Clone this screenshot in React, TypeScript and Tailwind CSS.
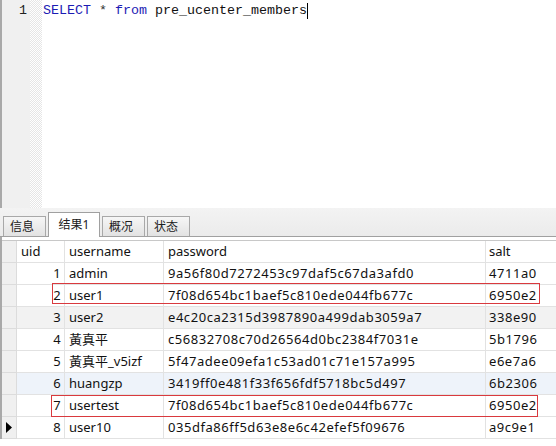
import React from "react";

const rows = [
  { uid: 1, name: "admin", pw: "9a56f80d7272453c97daf5c67da3afd0", salt: "4711a0", bg: "bg-white" },
  { uid: 2, name: "user1", pw: "7f08d654bc1baef5c810ede044fb677c", salt: "6950e2", bg: "bg-white" },
  { uid: 3, name: "user2", pw: "e4c20ca2315d3987890a499dab3059a7", salt: "338e90", bg: "bg-[#f2f2f2]" },
  { uid: 4, name: "黃真平", pw: "c56832708c70d26564d0bc2384f7031e", salt: "5b1796", bg: "bg-white" },
  { uid: 5, name: "黃真平_v5izf", pw: "5f47adee09efa1c53ad01c71e157a995", salt: "e6e7a6", bg: "bg-white" },
  { uid: 6, name: "huangzp", pw: "3419ff0e481f33f656fdf5718bc5d497", salt: "6b2306", bg: "bg-[#eef3fa]" },
  { uid: 7, name: "usertest", pw: "7f08d654bc1baef5c810ede044fb677c", salt: "6950e2", bg: "bg-white" },
  { uid: 8, name: "user10", pw: "035dfa86ff5d63e8e6c42efef5f09676", salt: "a9c9e1", bg: "bg-white" },
];

const cellFont = { fontFamily: '"Noto Sans", "Noto Sans CJK SC", sans-serif' };

export default function App() {
  return (
    <div className="w-[556px] h-[446px] overflow-hidden bg-white relative">
      {/* Editor */}
      <div className="h-[208px] flex border-l-[2px] border-[#a9a9a9] bg-white">
        <div className="w-[28px] bg-[#f0f0f0] flex justify-end pr-[3px] pt-[2px]">
          <span
            className="text-[13.33px] leading-[17px] text-[#202020]"
            style={{ fontFamily: '"Liberation Mono", monospace' }}
          >
            1
          </span>
        </div>
        <div className="w-[12px] bg-[repeating-conic-gradient(#e6e6e6_0_25%,#ffffff_0_50%)] bg-[length:2px_2px]" />
        <div className="flex-1 pl-[1px] pt-[2px]">
          <div
            className="text-[13.33px] leading-[17px] whitespace-pre flex items-center"
            style={{ fontFamily: '"Liberation Mono", monospace' }}
          >
            <span className="text-[#1c1cb4]">SELECT</span>
            <span className="text-[#303030]"> * </span>
            <span className="text-[#1c1cb4]">from</span>
            <span className="text-[#101010]"> pre_ucenter_members</span>
            <span className="inline-block w-[1px] h-[16px] bg-black" />
          </div>
        </div>
      </div>

      {/* Tab strip */}
      <div className="h-[29px] bg-[linear-gradient(#f3f3f3,#ebebeb)] border-b border-[#a0a0a0] flex items-end pl-[3px] gap-[2px]">
        {["信息", "结果1", "概况", "状态"].map((t, i) =>
          i === 1 ? (
            <div
              key={t}
              className="h-[25px] w-[52px] bg-white border border-b-0 border-[#a0a0a0] flex items-center justify-center text-[12px] text-[#202020] -mb-px"
              style={cellFont}
            >
              {t}
            </div>
          ) : (
            <div
              key={t}
              className="h-[20px] w-[43px] bg-[linear-gradient(#f6f6f6,#e2e2e2)] border border-b-0 border-[#a8a8a8] flex items-center pl-[6px] text-[12px] text-[#202020]"
              style={cellFont}
            >
              {t}
            </div>
          )
        )}
      </div>

      {/* Grid */}
      <div className="border-l-[2px] border-[#a9a9a9] pt-[3px] bg-white" style={cellFont}>
        <div className="border-t border-[#c8c8c8] grid grid-cols-[15px_48px_99px_322px_100px] text-[13px] text-[#111111]">
          <div className="h-[22px] bg-[#f0f0f0] border-b border-r border-[#dcdcdc]" />
          <div className="h-[22px] border-b border-r border-[#e2e2e2] flex items-center pl-[4px]">uid</div>
          <div className="h-[22px] border-b border-r border-[#e2e2e2] flex items-center pl-[4px]">username</div>
          <div className="h-[22px] border-b border-r border-[#e2e2e2] flex items-center pl-[4px]">password</div>
          <div className="h-[22px] border-b border-r border-[#e2e2e2] flex items-center pl-[3px]">salt</div>
          {rows.map((r, i) => (
            <React.Fragment key={r.uid}>
              <div className="h-[22px] bg-[#f0f0f0] border-b border-r border-[#dcdcdc] flex items-center pl-[4px]">
                {i === 7 && (
                  <svg width="6" height="11" viewBox="0 0 6 11">
                    <path d="M0 0 L6 5.5 L0 11 Z" fill="#000" />
                  </svg>
                )}
              </div>
              <div className={`h-[22px] ${r.bg} border-b border-r border-[#e2e2e2] flex items-center justify-end pr-[3px] tracking-[0.4px]`}>{r.uid}</div>
              <div className={`h-[22px] ${r.bg} border-b border-r border-[#e2e2e2] flex items-center pl-[4px] whitespace-nowrap`}>{r.name}</div>
              <div className={`h-[22px] ${r.bg} border-b border-r border-[#e2e2e2] flex items-center pl-[4px] whitespace-nowrap tracking-[0.55px]`}>{r.pw}</div>
              <div className={`h-[22px] ${r.bg} border-b border-r border-[#e2e2e2] flex items-center pl-[3px] tracking-[0.55px]`}>{r.salt}</div>
            </React.Fragment>
          ))}
        </div>
      </div>

      {/* Red highlight boxes */}
      <div className="absolute left-[52px] top-[283px] w-[488px] h-[21px] border border-[#d9393e]" />
      <div className="absolute left-[51px] top-[395px] w-[487px] h-[22px] border border-[#d9393e]" />
    </div>
  );
}
